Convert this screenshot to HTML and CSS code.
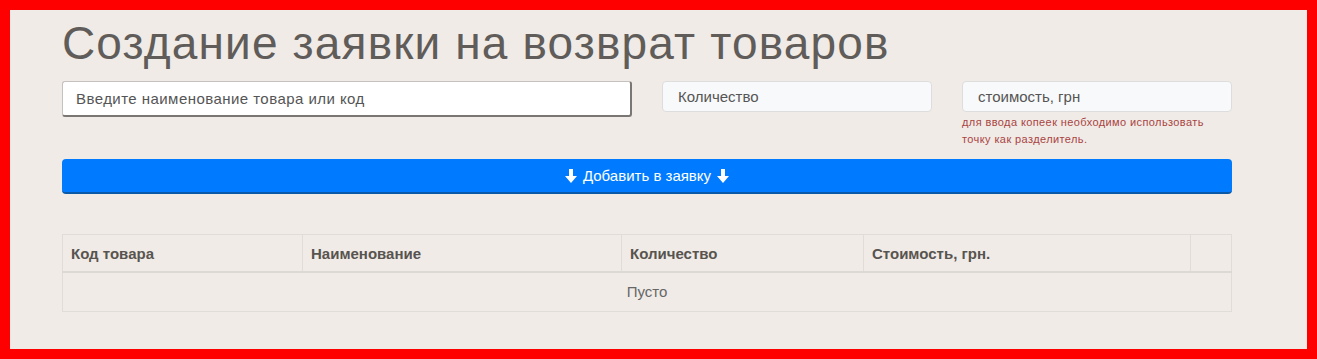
FILE: index.html
```html
<!DOCTYPE html>
<html lang="ru">
<head>
  <meta charset="UTF-8" />
  <title>Создание заявки на возврат товаров</title>
  <link rel="stylesheet" href="styles.css">
</head>
<body>
  <div class="frame">
    <div class="container">
      <h1 class="title">Создание заявки на возврат товаров</h1>

      <div class="form-row">
        <div class="col col-name">
          <input type="text" class="field field-main" placeholder="Введите наименование товара или код">
        </div>
        <div class="col col-qty">
          <input type="text" class="field" placeholder="Количество">
        </div>
        <div class="col col-price">
          <input type="text" class="field" placeholder="стоимость, грн">
          <div class="hint">для ввода копеек необходимо использовать точку как разделитель.</div>
        </div>
      </div>

      <button class="add-btn" type="button">
        <svg class="arrow" width="12" height="14" viewBox="0 0 12 14"><path d="M4 0h4v7h4l-6 7-6-7h4z" fill="#fff"/></svg>
        Добавить в заявку
        <svg class="arrow" width="12" height="14" viewBox="0 0 12 14"><path d="M4 0h4v7h4l-6 7-6-7h4z" fill="#fff"/></svg>
      </button>

      <table class="items">
        <thead>
          <tr>
            <th class="c1">Код товара</th>
            <th class="c2">Наименование</th>
            <th class="c3">Количество</th>
            <th class="c4">Стоимость, грн.</th>
            <th class="c5"></th>
          </tr>
        </thead>
        <tbody>
          <tr>
            <td colspan="5" class="empty">Пусто</td>
          </tr>
        </tbody>
      </table>
    </div>
  </div>
</body>
</html>
```

FILE: styles.css
```css
html, body {
  margin: 0;
  padding: 0;
}

body {
  font-family: 'Liberation Sans', Arial, sans-serif;
  background: #ff0000;
  color: #555;
  width: 1317px;
  height: 359px;
  overflow: hidden;
}

.frame {
  margin: 10px;
  height: 339px;
  background: #f0ebe7;
}

.container {
  width: 1170px;
  padding-left: 52px;
}

.title {
  margin: 0;
  padding-top: 8px;
  height: 60px;
  font-size: 46px;
  font-weight: normal;
  line-height: 50px;
  color: #605c59;
  letter-spacing: 1.15px;
}

.form-row {
  display: flex;
  gap: 30px;
  height: 81px;
}

.col-name {
  width: 570px;
}

.col-qty,
.col-price {
  width: 270px;
}

.field {
  box-sizing: border-box;
  width: 100%;
  height: 31px;
  margin-top: 3px;
  padding: 0 15px;
  font-family: inherit;
  font-size: 15px;
  border: 1px solid #ddd;
  border-radius: 4px;
  background: #f8f9fa;
  color: #555;
}

.field::placeholder {
  color: #555;
}

.field-main {
  height: 36px;
  padding: 0 13px;
  letter-spacing: 0.45px;
  background: #fff;
  border: 1px solid #c4c1be;
  border-right: 2px solid #7a7673;
  border-bottom: 2px solid #7a7673;
  border-radius: 3px;
}

.hint {
  margin-top: 2px;
  font-size: 11px;
  line-height: 17px;
  letter-spacing: 0.4px;
  color: #a94442;
}

.add-btn {
  display: flex;
  justify-content: center;
  align-items: center;
  gap: 6px;
  width: 1170px;
  height: 35px;
  padding: 0;
  border: none;
  border-bottom: 2px solid #0a58a8;
  border-radius: 4px;
  background: #007bff;
  color: #fff;
  font-family: inherit;
  font-size: 15px;
}

.arrow {
  display: block;
}

.items {
  width: 1170px;
  margin-top: 40px;
  border-collapse: collapse;
  table-layout: fixed;
  font-size: 15px;
}

.items th {
  height: 36px;
  padding: 0 8px;
  text-align: left;
  font-weight: bold;
  color: #58544f;
  border: 1px solid #e0dcd8;
  border-bottom: 2px solid #dcd8d4;
}

.items .c1 { width: 223px; }
.items .c2 { width: 302px; }
.items .c3 { width: 225px; }
.items .c4 { width: 310px; }

.items td {
  height: 36px;
  padding: 0 0 2px;
  border: 1px solid #e0dcd8;
}

.empty {
  text-align: center;
  color: #666;
}
```
